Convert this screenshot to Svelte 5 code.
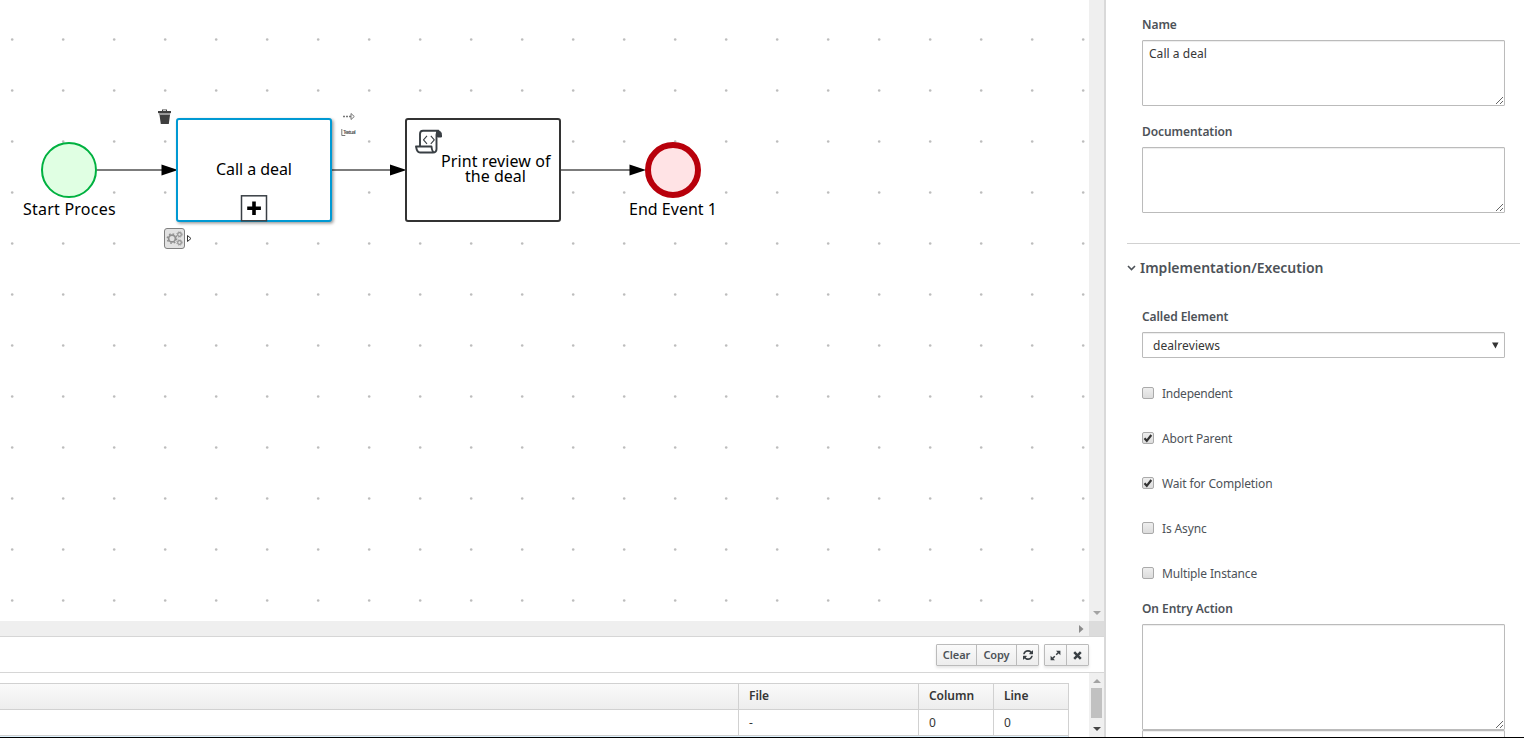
<script>
  const dots = [];
  for (let y = 0; y < 12; y++) for (let x = 0; x < 22; x++) dots.push([12.2 + x * 51, 39.5 + y * 51]);
  const checks = [
    ['Independent', false],
    ['Abort Parent', true],
    ['Wait for Completion', true],
    ['Is Async', false],
    ['Multiple Instance', false]
  ];
</script>

{#snippet grip()}
  <svg class="grip" width="9" height="9" viewBox="0 0 9 9"><path d="M1 8L8 1M5 8L8 5" stroke="#555" fill="none" stroke-width=".9" /></svg>
{/snippet}

<div class="page">
  <main>
    <div class="top">
      <svg class="canvas" width="1089" height="621" viewBox="0 0 1089 621">
        <defs>
          <filter id="sh" x="-10%" y="-10%" width="125%" height="125%" color-interpolation-filters="sRGB"><feDropShadow dx="1.5" dy="1.5" stdDeviation="1.5" flood-color="#000" flood-opacity=".4" /></filter>
        </defs>
        {#each dots as [x, y]}<circle cx={x} cy={y} r="1.3" fill="#bdbdbd" />{/each}

        <g stroke="#7c7c7c" stroke-width="2">
          <path d="M97 170H163M332 170H392M561 170H631" />
        </g>
        <path d="M161.500 164.500L178 170l-16.500 5.500zM390 164.500L406.500 170l-16.500 5.500zM629.500 164.500L646 170l-16.500 5.500z" fill="#000" />

        <circle cx="69" cy="170" r="27" fill="#e0ffe3" stroke="#00b140" stroke-width="2" />
        <text x="69.300" y="215" textLength="92.500">Start Proces</text>

        <rect x="177" y="119" width="154" height="102" rx="2" fill="#fff" stroke="#0099d3" stroke-width="2" filter="url(#sh)" />
        <text x="254" y="175" textLength="76">Call a deal</text>
        <rect x="241.500" y="195.800" width="25" height="25" fill="#fff" stroke="#393f44" stroke-width="1.500" />
        <path d="M254 201.500v13.500M247.200 208.200h13.700" stroke="#000" stroke-width="3.600" />

        <rect x="406" y="119" width="154" height="102" rx="2" fill="#fff" stroke="#333" stroke-width="2" />
        <text x="495.700" y="167" textLength="109.500">Print review of</text>
        <text x="495.500" y="182" textLength="61">the deal</text>
        <g fill="none" stroke="#393f44" stroke-width="1.900" stroke-linejoin="round">
          <path d="M420 146V134q0-3.300 3-3.300h15.500q-2 1-2 4V149q0 3.500-3.500 3.500h-13q-3 0-4-6h15.500q.5 5.500 3 6" />
          <path d="M438 131q3.500 0 3.500 3.500v2.500h-4v-3q0-2.500.5-3z" fill="#393f44" stroke-width="1" />
          <path d="M427 135.800l-3.500 4 3.500 4M430.800 135.800l3.500 4-3.500 4" stroke-width="1.100" />
        </g>

        <circle cx="673" cy="170" r="25" fill="#ffe3e5" stroke="#b8000b" stroke-width="6" />
        <text x="673" y="215" textLength="88">End Event 1</text>

        <g fill="#3f3f3f">
          <path d="M158 111h4v-1.500h5v1.500h4v2h-13zM159.500 115h10.500l-1.200 9h-8z" />
          <path d="M158.500 113h12l-.5 2h-11z" fill="#999" />
          <path d="M163 111v-.700h3v.700z" fill="#fff" />
        </g>
        <g fill="none" stroke="#777" stroke-width="1.300">
          <path d="M343 116.500h8" stroke-dasharray="2 1" />
          <path d="M351 113.500l3.300 3-3.300 3z" stroke-width="1" />
          <path d="M341.800 129v6.500h3.500" stroke-width="1" />
        </g>
        <text class="tiny" x="349.500" y="133.800" textLength="12.500">Textual</text>
        <rect x="164.500" y="228.500" width="20" height="20" rx="2.500" fill="#e2e2e2" stroke="#808080" />
        <g fill="none" stroke="#909090">
          <circle cx="172" cy="238.500" r="3.400" stroke-width="1.700" />
          <circle cx="172" cy="238.500" r="4.700" stroke-width="1.400" stroke-dasharray="1.700 1.990" />
          <circle cx="179.500" cy="234.500" r="1.800" stroke-width="1.200" />
          <circle cx="179.500" cy="242.500" r="1.800" stroke-width="1.200" />
          <circle cx="179.500" cy="234.500" r="2.700" stroke-width=".9" stroke-dasharray="1.200 1" />
          <circle cx="179.500" cy="242.500" r="2.700" stroke-width=".9" stroke-dasharray="1.200 1" />
        </g>
        <path d="M187.500 235.500l3.500 3-3.500 3z" fill="none" stroke="#333" />
      </svg>
      <div class="vbar"><svg width="8" height="5"><path d="M0 0h8L4 4z" fill="#a3a3a3" /></svg></div>
      <div class="hbar"><svg width="5" height="8"><path d="M0 0v8l4.500-4z" fill="#8c8c8c" /></svg></div>
      <div class="corner"></div>
    </div>

    <div class="tools">
      <div class="group">
        <button class="clear">Clear</button><button class="copy">Copy</button><button class="icon" aria-label="Refresh"><svg width="10" height="10" viewBox="0 0 1536 1536"><path fill="#393f44" d="M1511 928q0 5-1 7-64 268-268 434.500T764 1536q-146 0-282.500-55T238 1324l-129 129q-19 19-45 19t-45-19-19-45V960q0-26 19-45t45-19h448q26 0 45 19t19 45-19 45l-137 137q71 66 161 102t187 36q134 0 250-65t186-179q11-17 53-117 8-23 30-23h192q13 0 22.500 9.500t9.500 22.500zm25-800v448q0 26-19 45t-45 19h-448q-26 0-45-19t-19-45 19-45l138-138Q969 256 768 256q-134 0-250 65T332 500q-11 17-53 117-8 23-30 23H50q-13 0-22.500-9.500T18 608v-7q65-268 270-434.500T768 0q146 0 284 55.500T1297 212l130-129q19-19 45-19t45 19 19 45z" /></svg></button>
      </div>
      <div class="group">
        <button class="icon" aria-label="Expand"><svg width="11" height="11" viewBox="0 0 11 11"><path d="M6 .8h4.400v4.400zM.6 5.800v4.400H5z" fill="#393f44" /><path d="M8.500 2.500L6.200 4.800M4.800 6.200L2.500 8.500" stroke="#393f44" stroke-width="1.500" /></svg></button><button class="icon" aria-label="Close"><svg width="9" height="9" viewBox="0 0 9 9"><path d="M1.200 1.200l6.600 6.600M7.800 1.200L1.200 7.800" stroke="#393f44" stroke-width="2.500" /></svg></button>
      </div>
    </div>

    <div class="bottom">
      <div class="grid">
        <div class="row head"><span></span><span>File</span><span>Column</span><span>Line</span></div>
        <div class="row"><span></span><span>-</span><span>0</span><span>0</span></div>
        <div class="selected"></div>
      </div>
      <div class="scroll">
        <svg width="8" height="4"><path d="M0 4h8L4 0z" fill="#a3a3a3" /></svg>
        <div class="thumb"></div>
        <svg width="8" height="4"><path d="M0 0h8L4 4z" fill="#444" /></svg>
      </div>
    </div>
  </main>

  <aside>
    <div class="cap name">Name</div>
    <div class="area">Call a deal{@render grip()}</div>
    <div class="cap doc">Documentation</div>
    <div class="area">{@render grip()}</div>
    <hr />
    <h3><svg width="9" height="6" viewBox="0 0 9 6"><path d="M1 1l3.500 3.500L8 1" fill="none" stroke="#4d5258" stroke-width="1.600" /></svg>Implementation/Execution</h3>
    <div class="cap called">Called Element</div>
    <div class="select">dealreviews<svg width="7" height="7"><path d="M0 .500h6.500L3.500 6.500z" fill="#333" /></svg></div>
    <div class="checks">
      {#each checks as [text, on]}
        <div class="check"><i>{#if on}<svg width="10" height="10" viewBox="0 0 10 10"><path d="M1.500 5.200l2.300 2.600L8.300 2" fill="none" stroke="#333" stroke-width="2.200" /></svg>{/if}</i><span>{text}</span></div>
      {/each}
    </div>
    <div class="cap entry">On Entry Action</div>
    <div class="area tall">{@render grip()}</div>
    <div class="area next"></div>
  </aside>
  <div class="edge"></div>
</div>

<style>
  :global(body) { background: #fff; overflow: hidden; }
  .page, .page * { box-sizing: border-box; }
  .page { position: relative; display: flex; width: 1524px; height: 738px; overflow: hidden; font: 12px/20px "Noto Sans", "Open Sans", sans-serif; color: #363636; }
  .edge { position: absolute; bottom: 0; left: 0; right: 0; height: 1px; background: #000; }
  main { width: 1106px; flex: none; border-right: 2px solid #d9d9d9; display: flex; flex-direction: column; }
  .top { display: grid; grid-template: 621px 15px / 1089px 15px; }
  .canvas { display: block; }
  .canvas text { font: 16px "Noto Sans", sans-serif; fill: #000; text-anchor: middle; }
  .canvas .tiny { font-size: 5px; font-weight: 600; fill: #555; }
  .vbar, .hbar { background: #efefef; display: flex; align-items: center; justify-content: center; }
  .vbar { align-items: flex-end; padding-bottom: 5px; }
  .hbar { justify-content: flex-end; padding-right: 5px; }
  .corner { background: #dcdcdc; }
  .tools { height: 37px; border-top: 1px solid #d6d6d6; border-bottom: 1px solid #d6d6d6; display: flex; justify-content: flex-end; gap: 5px; padding: 7px 15px 0 0; }
  .group { display: flex; height: 22px; border: 1px solid #bbb; border-radius: 1px; box-shadow: 0 2px 3px rgba(3,3,3,.1); }
  button { font: 600 11px/18px "Noto Sans", sans-serif; letter-spacing: -.1px; color: #4d5258; padding: 0; border: 0; background: linear-gradient(#fafafa, #ededed); display: flex; align-items: center; justify-content: center; }
  button + button { border-left: 1px solid #bbb; }
  .clear { width: 39px; }
  .copy { width: 40px; }
  .icon { width: 22px; }
  .group:last-child .icon:first-child { width: 21px; }
  .bottom { flex: 1; display: flex; overflow: hidden; }
  .grid { width: 1069px; margin: 10px 20px 0 0; flex: none; border-top: 1px solid #d1d1d1; border-right: 1px solid #d1d1d1; height: 70px; }
  .row { display: grid; grid-template-columns: 738px 180px 75px 75px; height: 26px; border-bottom: 1px solid #d1d1d1; }
  .row span { padding: 3px 10px; border-left: 1px solid #d1d1d1; }
  .row span:first-child { border: 0; }
  .head { background: linear-gradient(#fafafa, #ededed); font-weight: 600; letter-spacing: -.05px; }
  .head span { padding-top: 2px; }
  .selected { height: 2px; background: #def3ff; }
  .scroll { width: 15px; background: #f0f0f0; padding-top: 6px; display: flex; flex-direction: column; align-items: center; }
  .thumb { width: 11px; height: 30px; margin: 5px 0 9px; background: #c1c1c1; flex: none; }
  .scroll svg { flex: none; }
  aside { flex: 1; min-width: 0; padding: 15px 19px 0 36px; display: flex; flex-direction: column; }
  .cap { height: 20px; font-weight: 600; letter-spacing: -.07px; color: #4d5258; flex: none; }
  .area { position: relative; height: 66px; margin-top: 5px; padding: 3px 6px 0; border: 1px solid #bbb; border-radius: 1px; box-shadow: inset 0 1px 1px rgba(3,3,3,.075); letter-spacing: .04px; flex: none; }
  .grip { position: absolute; right: 0; bottom: 0; }
  .doc { margin-top: 16px; }
  hr { width: 393px; height: 1px; margin: 30px 0 0 -15px; border: 0; background: #d1d1d1; flex: none; }
  h3 { display: flex; align-items: center; gap: 4px; margin: 14px 0 0 -15px; height: 20px; font: 600 14px/20px "Noto Sans", sans-serif; color: #4d5258; flex: none; }
  .called { margin-top: 29px; }
  .select { display: flex; justify-content: space-between; align-items: center; height: 26px; margin-top: 5px; padding: 1px 5px 0 10px; line-height: 21px; letter-spacing: .08px; border: 1px solid #bbb; border-radius: 1px; box-shadow: inset 0 1px 1px rgba(3,3,3,.075); flex: none; }
  .select svg { margin-bottom: 1px; }
  .checks { margin-top: 25px; display: grid; gap: 25px; color: #4d5258; }
  .check { display: flex; align-items: center; gap: 8px; height: 20px; letter-spacing: -.14px; }
  .check:first-child { letter-spacing: -.25px; }
  .check span { padding-top: 2px; }
  .check i { width: 12px; height: 12px; border: 1px solid #aaa; border-radius: 2px; background: linear-gradient(#eee, #dcdcdc); display: flex; }
  .entry { margin-top: 16px; }
  .tall { height: 106px; margin-top: 5px; }
  .next { margin-top: 0; }
</style>
